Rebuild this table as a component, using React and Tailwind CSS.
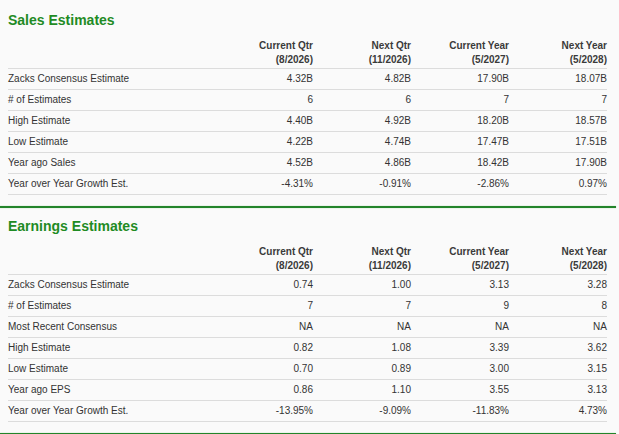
import React from "react";

const sales = {
  title: "Sales Estimates",
  headers: [
    ["Current Qtr", "(8/2026)"],
    ["Next Qtr", "(11/2026)"],
    ["Current Year", "(5/2027)"],
    ["Next Year", "(5/2028)"],
  ],
  rows: [
    ["Zacks Consensus Estimate", "4.32B", "4.82B", "17.90B", "18.07B"],
    ["# of Estimates", "6", "6", "7", "7"],
    ["High Estimate", "4.40B", "4.92B", "18.20B", "18.57B"],
    ["Low Estimate", "4.22B", "4.74B", "17.47B", "17.51B"],
    ["Year ago Sales", "4.52B", "4.86B", "18.42B", "17.90B"],
    ["Year over Year Growth Est.", "-4.31%", "-0.91%", "-2.86%", "0.97%"],
  ],
};

const earnings = {
  title: "Earnings Estimates",
  headers: sales.headers,
  rows: [
    ["Zacks Consensus Estimate", "0.74", "1.00", "3.13", "3.28"],
    ["# of Estimates", "7", "7", "9", "8"],
    ["Most Recent Consensus", "NA", "NA", "NA", "NA"],
    ["High Estimate", "0.82", "1.08", "3.39", "3.62"],
    ["Low Estimate", "0.70", "0.89", "3.00", "3.15"],
    ["Year ago EPS", "0.86", "1.10", "3.55", "3.13"],
    ["Year over Year Growth Est.", "-13.95%", "-9.09%", "-11.83%", "4.73%"],
  ],
};

function Section({ data, first }) {
  return (
    <section className={first ? "pt-[10px]" : "pt-[8px]"}>
      <h2 className="px-[8px] text-[14px] leading-[20px] font-bold text-[#1f8b24]">
        {data.title}
      </h2>
      <div className="mx-[8px] w-[599px]">
        <div className="grid grid-cols-[207px_98px_98px_98px_98px] border-b border-[#dcdcdc] pt-[9px] pb-[1px]">
          <div />
          {data.headers.map((h, i) => (
            <div key={i} className="text-right text-[10px] leading-[14px] font-bold text-[#3a3a3a]">
              <div>{h[0]}</div>
              <div>{h[1]}</div>
            </div>
          ))}
        </div>
        {data.rows.map((r, i) => (
          <div
            key={i}
            className="grid grid-cols-[207px_98px_98px_98px_98px] h-[21px] items-center border-b border-[#dcdcdc] text-[10px] leading-[20px] text-[#333333]"
          >
            {r.map((c, j) => (
              <div key={j} className={j === 0 ? "text-left" : "text-right"}>
                {c}
              </div>
            ))}
          </div>
        ))}
      </div>
      <div className="mt-[11px] w-[616px] h-[2px] bg-[#23842a] shadow-[0_0_1px_#6cc46c]" />
    </section>
  );
}

export default function App() {
  return (
    <div
      className="w-[619px] h-[434px] bg-[#fafafa] overflow-hidden"
      style={{ fontFamily: '"Liberation Sans", Arial, sans-serif' }}
    >
      <Section data={sales} first />
      <Section data={earnings} />
    </div>
  );
}
